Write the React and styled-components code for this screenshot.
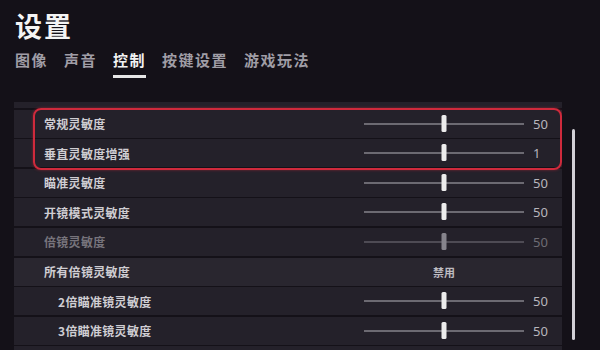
import React from 'react';
import styled, { createGlobalStyle } from 'styled-components';

const GlobalStyle = createGlobalStyle`
  html, body {
    margin: 0;
    padding: 0;
    background: #141118;
  }
  body {
    font-family: "Noto Sans CJK SC", "Noto Sans", sans-serif;
  }
`;

const Page = styled.div`
  width: 600px;
  height: 350px;
  overflow: hidden;
  background: #141118;
  color: #fff;
`;

const Header = styled.header`
  padding-left: 15px;
`;

const Title = styled.h1`
  margin: 8px 0 0;
  font-size: 27px;
  line-height: 36px;
  font-weight: 700;
  letter-spacing: 2px;
  color: #f4f4f4;
`;

const Tabs = styled.nav`
  display: flex;
  gap: 16px;
  margin-top: 6px;
`;

const Tab = styled.div`
  font-size: 15px;
  line-height: 20px;
  font-weight: 700;
  letter-spacing: 1.5px;
  padding-bottom: ${p => (p.active ? '5px' : '8px')};
  color: ${p => (p.active ? '#f2f2f2' : '#a09ea6')};
  border-bottom: ${p => (p.active ? '3px solid #e6e6e6' : 'none')};
`;

const ListArea = styled.section`
  display: flex;
  margin-top: 24px;
  padding-left: 14px;
  height: 250px;
`;

const Viewport = styled.div`
  position: relative;
  width: 548px;
  height: 100%;
  overflow: hidden;
`;

const List = styled.div`
  display: flex;
  flex-direction: column;
  gap: 1.6px;
  margin-top: -22px;
`;

const Row = styled.div`
  display: flex;
  align-items: center;
  height: 28px;
  background: ${p => (p.shade ? '#29262f' : '#24212a')};
`;

const Label = styled.div`
  flex: 1;
  padding-left: ${p => (p.indent ? 44 : 30)}px;
  font-size: 12px;
  font-weight: 700;
  letter-spacing: 0.3px;
  color: ${p => (p.dim ? '#77747c' : '#cfcdd2')};
`;

const Slider = styled.div`
  position: relative;
  width: 160px;
  height: 18px;
  display: flex;
  align-items: center;
  justify-content: center;
  margin-right: 9px;
`;

const Track = styled.div`
  width: 100%;
  height: 2px;
  background: ${p => (p.dim ? '#4e4b54' : '#6c6a72')};
`;

const Thumb = styled.div`
  position: absolute;
  top: 0;
  width: 5px;
  height: 17px;
  border-radius: 1.5px;
  background: ${p => (p.dim ? '#86848c' : '#ececec')};
  transform: translateX(-50%);
`;

const Value = styled.div`
  width: 29px;
  font-family: "Noto Sans", "Liberation Sans", sans-serif;
  font-size: 13px;
  color: ${p => (p.dim ? '#6e6c74' : '#b8b6bc')};
`;

const ModeText = styled.div`
  width: 160px;
  margin-right: 38px;
  text-align: center;
  font-size: 11px;
  font-weight: 700;
  color: #bdbbc1;
`;

const Highlight = styled.div`
  position: absolute;
  top: 6px;
  left: 19px;
  right: 0;
  height: 62px;
  box-sizing: border-box;
  border: 2px solid #cf2a3c;
  border-radius: 8px;
  box-shadow: 0 0 3px rgba(220, 40, 60, 0.5);
  pointer-events: none;
`;

const ScrollCol = styled.div`
  padding-left: 10px;
  padding-top: 27px;
`;

const ScrollThumb = styled.div`
  width: 3px;
  height: 211px;
  border-radius: 2px;
  background: #d2d0d6;
`;

const tabs = ['图像', '声音', '控制', '按键设置', '游戏玩法'];

// first and last rows are only partly in view (scrolled list)
const rows = [
  { label: '', value: 50, hidden: true },
  { label: '常规灵敏度', value: 50 },
  { label: '垂直灵敏度增强', value: 1 },
  { label: '瞄准灵敏度', value: 50 },
  { label: '开镜模式灵敏度', value: 50 },
  { label: '倍镜灵敏度', value: 50, dim: true },
  { label: '所有倍镜灵敏度', mode: '禁用', shade: true },
  { label: '2倍瞄准镜灵敏度', value: 50, indent: true },
  { label: '3倍瞄准镜灵敏度', value: 50, indent: true },
  { label: '', value: '', indent: true },
];

function SliderRow({ row }) {
  return (
    <Row shade={row.shade}>
      <Label indent={row.indent} dim={row.dim}>{row.label}</Label>
      {row.mode ? (
        <ModeText>{row.mode}</ModeText>
      ) : (
        <>
          <Slider>
            <Track dim={row.dim} />
            {!row.hidden && <Thumb dim={row.dim} style={{ left: '50%' }} />}
          </Slider>
          <Value dim={row.dim}>{row.hidden ? '' : row.value}</Value>
        </>
      )}
    </Row>
  );
}

export default function App() {
  return (
    <Page>
      <GlobalStyle />
      <Header>
        <Title>设置</Title>
        <Tabs>
          {tabs.map(t => (
            <Tab key={t} active={t === '控制'}>{t}</Tab>
          ))}
        </Tabs>
      </Header>
      <ListArea>
        <Viewport>
          <List>
            {rows.map((r, i) => (
              <SliderRow key={i} row={r} />
            ))}
          </List>
          <Highlight />
        </Viewport>
        <ScrollCol>
          <ScrollThumb />
        </ScrollCol>
      </ListArea>
    </Page>
  );
}
